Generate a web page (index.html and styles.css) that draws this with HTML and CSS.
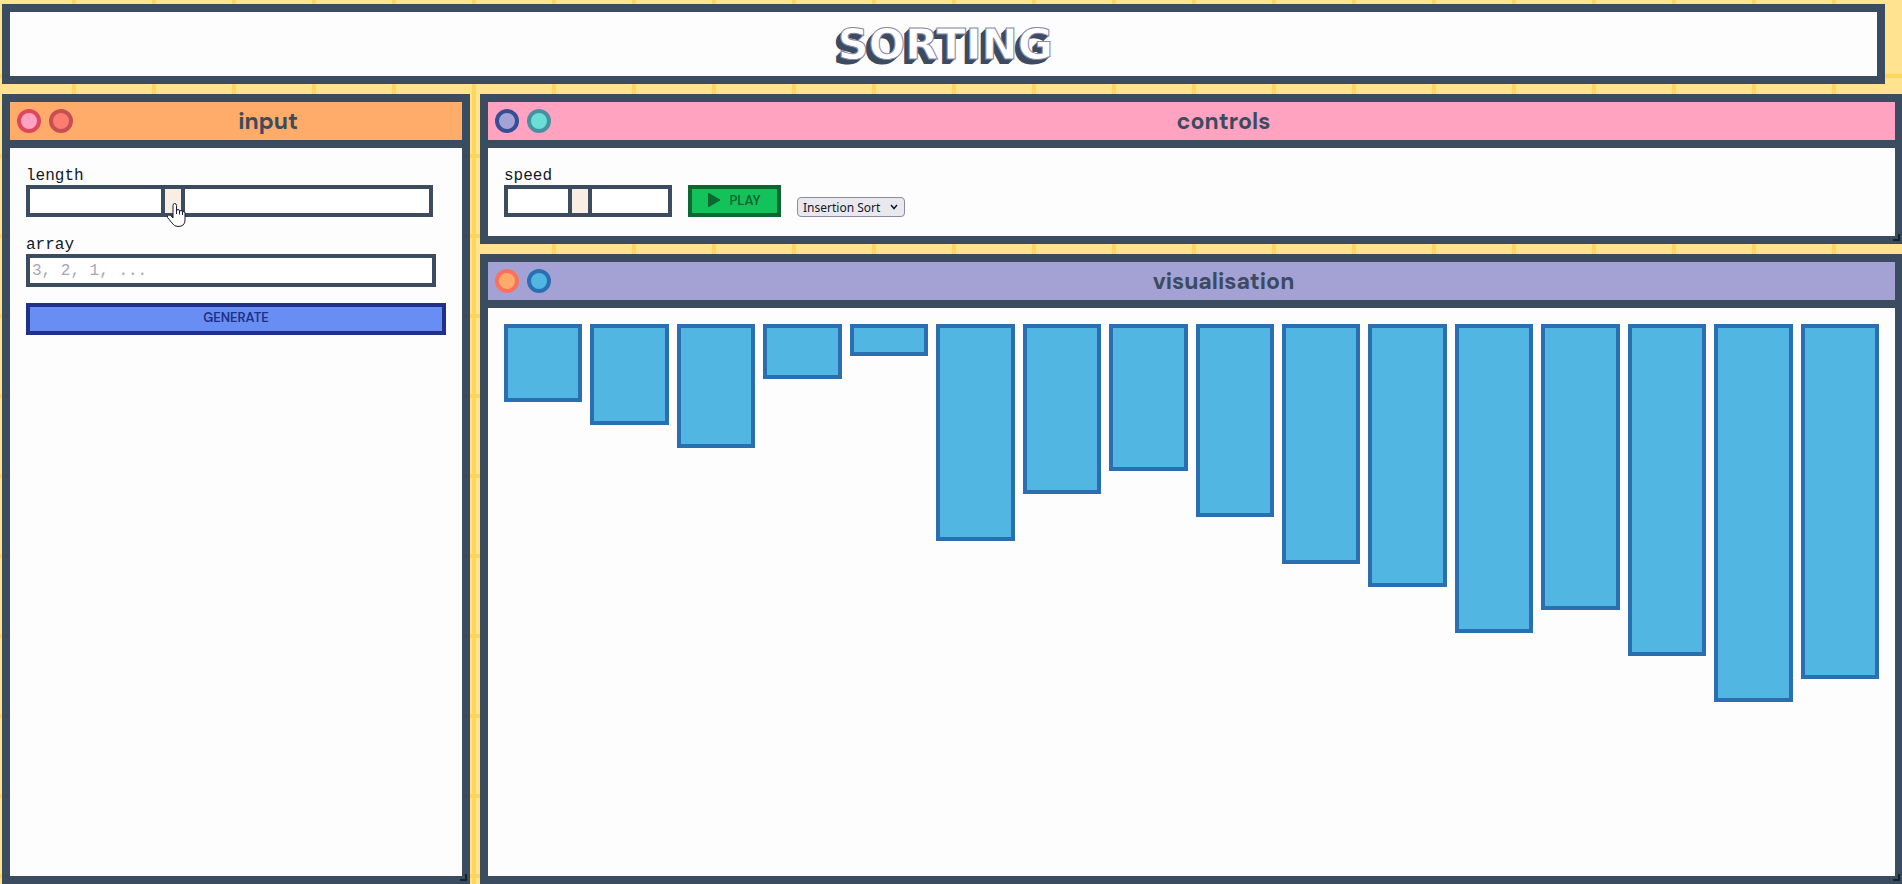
FILE: index.html
```html
<!DOCTYPE html>
<html lang="en">
<head>
<meta charset="utf-8">
<title>Sorting</title>
<link rel="stylesheet" href="styles.css">
</head>
<body>
<div class="page">
  <header class="banner"><h1 class="banner-title">SORTING</h1></header>
  <main class="workspace">
    <section class="panel panel-input">
      <div class="panel-head head-orange">
        <span class="dot dot-pink"></span><span class="dot dot-red"></span>
        <h2 class="panel-title">input</h2>
      </div>
      <form class="panel-body input-form">
        <div class="field field-length">
          <label for="length">length</label>
          <input class="slider" id="length" type="range" min="0" max="100" value="35" step="1">
          <svg class="pointer" viewBox="0 0 20 26" aria-hidden="true"><path d="M7 14V3.500Q7 1.500 8.700 1.500T10.500 3.500V9Q10.500 7.500 12 7.500T13.500 9V10Q13.500 8.500 15 8.500T16.500 10V11Q16.500 9.500 17.800 9.500T19 11.500V18Q19 24.500 12 24.500Q8 24.500 6 21L1.500 15.500Q1 13.500 2.700 13T6 15L7 16Z"/><path d="M10.500 8V12M13.500 9V12.500M16.500 10V13"/></svg>
        </div>
        <div class="field field-array">
          <label for="array">array</label>
          <input class="text-box" id="array" type="text" placeholder="3, 2, 1, ...">
        </div>
        <button class="btn btn-generate" type="button">GENERATE</button>
      </form>
      <span class="grip"></span>
    </section>
    <div class="stack">
      <section class="panel">
        <div class="panel-head head-pink">
          <span class="dot dot-lilac"></span><span class="dot dot-mint"></span>
          <h2 class="panel-title">controls</h2>
        </div>
        <div class="panel-body controls-body">
          <div class="field field-speed">
            <label for="speed">speed</label>
            <input class="slider" id="speed" type="range" min="0" max="100" value="44">
          </div>
          <button class="btn btn-play" type="button"><svg class="play-icon" viewBox="0 0 12 14" aria-hidden="true"><path d="M0 1Q0 0 1 0L12 6.500V7.500L1 14Q0 14 0 13Z"/></svg>PLAY</button>
          <div class="picker">
            <select class="algorithm" aria-label="Algorithm"><option>Insertion Sort</option></select>
            <svg class="chevron" viewBox="0 0 8 6" aria-hidden="true"><path d="M1 1L4 4.500L7 1"/></svg>
          </div>
        </div>
        <span class="grip"></span>
      </section>
      <section class="panel panel-visual">
        <div class="panel-head head-lilac">
          <span class="dot dot-orange"></span><span class="dot dot-blue"></span>
          <h2 class="panel-title">visualisation</h2>
        </div>
        <div class="panel-body bars">
          <div class="bar" style="height:78px"></div>
          <div class="bar" style="height:101px"></div>
          <div class="bar" style="height:124px"></div>
          <div class="bar" style="height:55px"></div>
          <div class="bar" style="height:32px"></div>
          <div class="bar" style="height:217px"></div>
          <div class="bar" style="height:170px"></div>
          <div class="bar" style="height:147px"></div>
          <div class="bar" style="height:193px"></div>
          <div class="bar" style="height:240px"></div>
          <div class="bar" style="height:263px"></div>
          <div class="bar" style="height:309px"></div>
          <div class="bar" style="height:286px"></div>
          <div class="bar" style="height:332px"></div>
          <div class="bar" style="height:378px"></div>
          <div class="bar" style="height:355px"></div>
        </div>
        <span class="grip"></span>
      </section>
    </div>
  </main>
</div>
</body>
</html>
```
FILE: styles.css
```css
:root {
  --ink: #3b4b60;
  --paper: #fdfdfd;
  --sand: #ffe38f;
  --line: #ffd55b;
}
* { box-sizing: border-box; }
body {
  margin: 0;
  overflow: hidden;
  font-family: "Liberation Mono", monospace;
  font-size: 16px;
  color: #10182a;
  background-color: var(--sand);
  background-image:
    linear-gradient(to right, var(--line) 4px, transparent 4px),
    linear-gradient(to bottom, var(--line) 4px, transparent 4px);
  background-size: 80px 80px;
  background-position: 72px 0, 0 74px;
}
.page {
  min-height: 100vh;
  padding: 4px 0 0 2px;
  display: flex;
  flex-direction: column;
  gap: 10px;
}
.banner {
  margin-right: 17px;
  height: 80px;
  border: 8px solid var(--ink);
  background: var(--paper);
  display: flex;
  align-items: center;
  justify-content: center;
}
.banner-title {
  margin: 0;
  padding-left: 4px;
  font: bold 43px/48px "DejaVu Sans", sans-serif;
  color: #fff;
  -webkit-text-stroke: 1px #8c86ab;
  text-shadow: -1px 1px var(--ink), -2px 2px var(--ink), -3px 3px var(--ink), -4px 4px var(--ink), -5px 5px var(--ink);
}
.workspace {
  flex: 1;
  display: grid;
  grid-template-columns: 468px 1fr;
  gap: 10px;
  margin-right: -1px;
}
.stack { display: flex; flex-direction: column; gap: 10px; }
.panel {
  position: relative;
  border: 8px solid var(--ink);
  background: var(--paper);
}
.panel-visual { flex: 1; }
.panel-head {
  display: flex;
  align-items: center;
  gap: 8px;
  height: 46px;
  padding: 0 7px;
  border-bottom: 8px solid var(--ink);
}
.head-orange { background: #ffab69; }
.head-pink { background: #ffa3c0; }
.head-lilac { background: #a4a2d5; }
.panel-title {
  flex: 1;
  margin: 0;
  text-align: center;
  font: bold 23px/38px "DM Sans", Inter, sans-serif;
  color: var(--ink);
}
.dot { width: 24px; height: 24px; border: 4px solid; border-radius: 50%; }
.dot-pink { background: #ffa3c0; border-color: #df475e; }
.dot-red { background: #fa7d70; border-color: #c54f53; }
.dot-lilac { background: #a4a2d5; border-color: #364f93; }
.dot-mint { background: #6adfd8; border-color: #488fa0; }
.dot-orange { background: #ffab69; border-color: #fa715f; }
.dot-blue { background: #51b6e1; border-color: #2b6fb3; }
.panel-body { padding: 16px; }
.input-form { display: flex; flex-direction: column; gap: 16px; }
.field { position: relative; display: flex; flex-direction: column; }
.field label { padding-top: 3px; line-height: 18px; }
.field-length { margin-right: 13px; }
.field-array { margin-right: 10px; }
.slider {
  appearance: none;
  display: block;
  width: 100%;
  height: 32px;
  margin: 0;
  border: 4px solid var(--ink);
  background: #fff;
}
.slider::-webkit-slider-thumb {
  appearance: none;
  width: 24px;
  height: 24px;
  border: solid var(--ink);
  border-width: 0 4px;
  background: #f8eee3;
}
.text-box {
  width: 100%;
  height: 33px;
  padding: 3px 2px 2px;
  border: 4px solid var(--ink);
  background: #fff;
  font: 16px "Liberation Mono", monospace;
}
.text-box::placeholder { color: #a6a6b8; }
.btn {
  height: 32px;
  font: 600 13px/16px "DM Sans", Inter, sans-serif;
}
.btn-generate {
  padding: 0 0 2px;
  border: 4px solid #213089;
  background: #688ef3;
  color: #213089;
}
.btn-play {
  display: flex;
  align-items: center;
  justify-content: center;
  gap: 9px;
  width: 93px;
  padding: 0;
  border: 4px solid #0b6830;
  background: #13c25b;
  color: #0b6830;
}
.play-icon { width: 12px; height: 14px; margin-bottom: 2px; fill: #0b6830; }
.pointer {
  position: absolute;
  left: 140px;
  top: 38px;
  width: 20px;
  height: 26px;
  fill: #fff;
  stroke: #1d1b35;
  stroke-width: 1;
}
.controls-body { display: flex; align-items: flex-end; gap: 16px; height: 88px; padding-bottom: 19px; }
.field-speed { width: 168px; }
.picker { position: relative; }
.algorithm {
  appearance: none;
  display: block;
  width: 108px;
  height: 20px;
  padding: 0 5px;
  border: 1px solid #8f88a8;
  border-radius: 4px;
  background: #e9e9ed;
  color: #10182a;
  font: 12px "Noto Sans", sans-serif;
}
.chevron {
  position: absolute;
  right: 7px;
  top: 7px;
  width: 8px;
  height: 6px;
  fill: none;
  stroke: #10182a;
  stroke-width: 1.5;
  pointer-events: none;
}
.bars { display: flex; align-items: flex-start; gap: 8px; }
.bar { flex: 1; border: 4px solid #2b6fb3; background: #51b6e1; }
.grip {
  position: absolute;
  right: -5px;
  bottom: -5px;
  width: 7px;
  height: 7px;
  border: solid #10242a;
  border-width: 0 2px 2px 0;
}
```
